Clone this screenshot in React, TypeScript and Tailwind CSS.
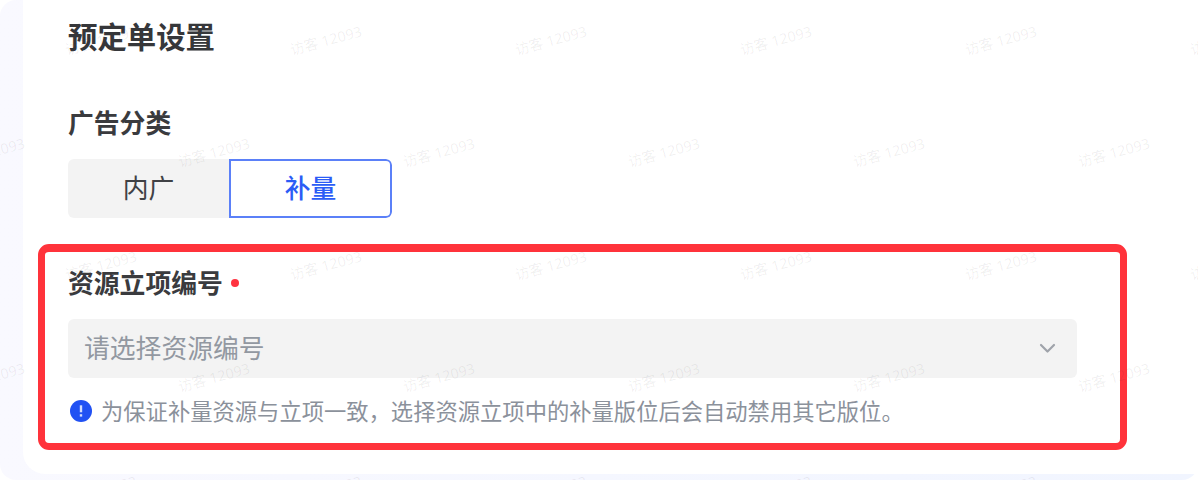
import { ReactNode } from "react";

const categories = [
  { key: "inner", label: "内广" },
  { key: "fill", label: "补量" },
];

// Watermark grid: odd rows are shifted by half a column
const MARK_COL = 225;
const MARK_ROW = 112.4;
const marks = Array.from({ length: 5 }, (_, row) =>
  Array.from({ length: 6 }, (_, col) => ({
    x: (row % 2 === 0 ? 101 : -11.5) + col * MARK_COL,
    y: 41 + row * MARK_ROW,
  }))
).flat();

function Watermark() {
  return (
    <div className="pointer-events-none absolute inset-0 overflow-hidden">
      {marks.map((m, i) => (
        <span
          key={i}
          className="absolute -translate-x-1/2 -translate-y-1/2 -rotate-15 whitespace-nowrap text-[14.4px] leading-none text-[#1f2329]/7 [font-family:'Noto_Sans','Noto_Sans_CJK_SC',sans-serif]"
          style={{ left: m.x, top: m.y }}
        >
          访客 12093
        </span>
      ))}
    </div>
  );
}

function FieldLabel({ children, required }: { children: ReactNode; required?: boolean }) {
  return (
    <div className="flex h-9 items-center text-[25.8px] font-bold leading-9 text-[#3a3b3e]">
      {children}
      {required && <span className="ml-2 mt-px size-2 rounded-full bg-[#ff3340]" />}
    </div>
  );
}

function CategoryTabs({ active }: { active: string }) {
  return (
    <div className="flex h-[59px] w-[324px] overflow-hidden rounded-md bg-[#f3f3f3] text-[25.8px]">
      {categories.map((c) => (
        <button
          key={c.key}
          className={
            c.key === active
              ? "flex w-[163px] items-center justify-center rounded-r-md border-2 border-[#5b80f8] bg-white pb-0.5 font-medium text-[#2b5cf6]"
              : "flex w-[161px] items-center justify-center pb-0.5 text-[#404145]"
          }
        >
          {c.label}
        </button>
      ))}
    </div>
  );
}

function ResourceSelect() {
  return (
    <div className="flex h-[59px] w-[1009px] items-center justify-between rounded-md bg-[#f3f3f3] pl-4 pr-[21px] text-[25.8px] text-[#9298a1]">
      <span className="pb-0.5">请选择资源编号</span>
      <svg width="17" height="11" viewBox="0 0 17 11" fill="none" stroke="#9fa3aa" strokeWidth="2.2" strokeLinecap="round" strokeLinejoin="round">
        <path d="M2 2l6.5 6.5L15 2" />
      </svg>
    </div>
  );
}

function Hint() {
  return (
    <div className="flex h-8 items-center gap-[9px] pl-0.5 text-[22.3px] leading-8 text-[#8b919b]">
      <svg width="22" height="22" viewBox="0 0 22 22" fill="none" className="shrink-0">
        <circle cx="11" cy="11" r="11" fill="#2151f3" />
        <path d="M11 5.3v7" stroke="#fff" strokeOpacity="0.8" strokeWidth="2.4" />
        <path d="M11 14.2v2.4" stroke="#fff" strokeOpacity="0.8" strokeWidth="2.4" />
      </svg>
      <span className="whitespace-nowrap pb-[3px]">为保证补量资源与立项一致，选择资源立项中的补量版位后会自动禁用其它版位。</span>
    </div>
  );
}

export default function App() {
  return (
    <div className="relative h-[480px] w-[1198px] overflow-hidden bg-white [font-family:'Noto_Sans_CJK_SC',sans-serif]">
      <div className="h-full rounded-2xl bg-linear-to-r from-[#f9f9ff] to-[#f1f5ff] pl-[23px]">
        <main className="flex h-[474px] flex-col rounded-bl-[22px] bg-white pl-[15px]">
          <div className="pl-[30px]">
            <h1 className="mt-[15px] h-10 text-[29.4px] font-bold leading-10 text-[#36373a]">预定单设置</h1>
            <div className="mb-[19px] mt-[49px]">
              <FieldLabel>广告分类</FieldLabel>
            </div>
            <CategoryTabs active="fill" />
          </div>

          {/* Highlighted field */}
          <section className="mt-[26px] flex h-[206px] w-[1089px] flex-col rounded-[11px] border-[7px] border-t-8 border-[#ff333b] pl-[23px] pt-3">
            <FieldLabel required>资源立项编号</FieldLabel>
            <div className="mb-[17px] mt-[19px]">
              <ResourceSelect />
            </div>
            <Hint />
          </section>
        </main>
      </div>
      <Watermark />
    </div>
  );
}
